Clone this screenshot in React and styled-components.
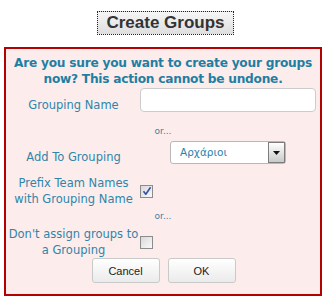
import React from "react";
import styled, { createGlobalStyle } from "styled-components";

const Global = createGlobalStyle`
  html, body { margin: 0; padding: 0; background: #ffffff; }
  body { font-family: "DejaVu Sans", Verdana, sans-serif; }
`;

const Page = styled.div`
  width: 325px;
  padding-top: 11px;
`;

const TitleRow = styled.div`
  display: flex;
  justify-content: center;
  padding-left: 6px;
`;

const TitleButton = styled.button`
  box-sizing: border-box;
  width: 137px;
  height: 24px;
  padding: 0;
  margin: 0;
  border: 1px dotted #222;
  background: linear-gradient(#f6f6f6, #dedede);
  font-family: "Liberation Sans", Arial, sans-serif;
  font-weight: bold;
  font-size: 17px;
  color: #333;
  line-height: 22px;
  cursor: pointer;
`;

const Panel = styled.div`
  box-sizing: border-box;
  width: 318px;
  margin: 12px 0 0 4px;
  border: 2px solid #b30000;
  background: #fdecec;
  padding: 6px 4px 11px 1px;
`;

const Heading = styled.div`
  font-weight: bold;
  font-size: 12.2px;
  letter-spacing: -0.25px;
  line-height: 16px;
  color: #1f7fa3;
  text-align: center;
  white-space: nowrap;
  padding-left: 3px;
`;

const FormGrid = styled.div`
  display: grid;
  grid-template-columns: 133px 176px;
  margin-top: 1px;
`;

const Label = styled.div`
  font-size: 11.5px;
  line-height: 16px;
  color: #2d86aa;
  text-align: center;
  white-space: nowrap;
  padding-top: ${(p) => p.$pt || 0}px;
  margin-top: ${(p) => p.$mt || 0}px;
`;

const Control = styled.div`
  display: flex;
  align-items: ${(p) => p.$align || "flex-start"};
  justify-content: ${(p) => p.$justify || "flex-start"};
  margin-top: ${(p) => p.$mt || 0}px;
`;

const Or = styled.div`
  grid-column: 1 / -1;
  font-size: 9px;
  line-height: 12px;
  color: #3d7fa3;
  text-align: center;
  padding-left: 3px;
  margin-top: ${(p) => p.$mt || 0}px;
`;

const TextInput = styled.input`
  box-sizing: border-box;
  width: 176px;
  height: 24px;
  margin: 0;
  border: 1px solid #cccccc;
  border-radius: 4px;
  background: #ffffff;
  padding: 0 6px;
  outline: none;
`;

const SelectBox = styled.div`
  box-sizing: border-box;
  width: 116px;
  height: 23px;
  border: 1px solid #b8b8b8;
  border-radius: 3px;
  background: #ffffff;
  display: flex;
  align-items: stretch;
`;

const SelectText = styled.span`
  flex: 1;
  padding-left: 9px;
  font-family: "DejaVu Sans", Verdana, sans-serif;
  font-size: 10.5px;
  line-height: 21px;
  color: #2c7fae;
`;

const ArrowButton = styled.span`
  box-sizing: border-box;
  width: 17px;
  border: 1px solid #7d7d7d;
  background: linear-gradient(#ffffff, #c9c9c9);
  display: flex;
  align-items: center;
  justify-content: center;
`;

const Box = styled.span`
  box-sizing: border-box;
  width: 13px;
  height: 13px;
  border: 1px solid #8c8c8c;
  background: linear-gradient(135deg, #d9d9d9, #f9f9f9);
  display: flex;
  align-items: center;
  justify-content: center;
`;

const ButtonRow = styled.div`
  display: flex;
  justify-content: center;
  gap: 8px;
  padding-left: 4px;
  margin-top: 0;
`;

const ActionButton = styled.button`
  box-sizing: border-box;
  width: 68px;
  height: 25px;
  margin: 0;
  padding: 0;
  border: 1px solid #c9c9c9;
  border-radius: 3px;
  background: linear-gradient(#ffffff, #ebebeb);
  font-family: "Liberation Sans", Arial, sans-serif;
  font-size: 11px;
  color: #222;
  cursor: pointer;
`;

function Checkbox({ checked }) {
  return (
    <Box>
      {checked && (
        <svg width="10" height="10" viewBox="0 0 10 10">
          <path d="M1.5 5.2 L3.8 8.2 L8.6 1.2" fill="none" stroke="#3550a8" strokeWidth="1.6" strokeLinejoin="round" />
        </svg>
      )}
    </Box>
  );
}

export default function App() {
  return (
    <Page>
      <Global />
      <TitleRow>
        <TitleButton>Create Groups</TitleButton>
      </TitleRow>
      <Panel>
        <Heading>
          Are you sure you want to create your groups
          <br />
          now? This action cannot be undone.
        </Heading>
        <FormGrid>
          <Label $pt={9}>Grouping Name</Label>
          <Control>
            <TextInput type="text" />
          </Control>

          <Or $mt={12}>or...</Or>

          <Label $pt={8} $mt={4}>Add To Grouping</Label>
          <Control $mt={4} $justify="center">
            <SelectBox role="listbox">
              <SelectText>Αρχάριοι</SelectText>
              <ArrowButton>
                <svg width="7" height="4" viewBox="0 0 7 4">
                  <path d="M0 0 H7 L3.5 4 Z" fill="#111" />
                </svg>
              </ArrowButton>
            </SelectBox>
          </Control>

          <Label $mt={10}>
            Prefix Team Names
            <br />
            with Grouping Name
          </Label>
          <Control $mt={10} $align="center">
            <Checkbox checked />
          </Control>

          <Or $mt={3}>or...</Or>

          <Label $mt={4}>
            Don't assign groups to
            <br />
            a Grouping
          </Label>
          <Control $mt={4} $align="center">
            <Checkbox />
          </Control>
        </FormGrid>
        <ButtonRow>
          <ActionButton>Cancel</ActionButton>
          <ActionButton>OK</ActionButton>
        </ButtonRow>
      </Panel>
    </Page>
  );
}
